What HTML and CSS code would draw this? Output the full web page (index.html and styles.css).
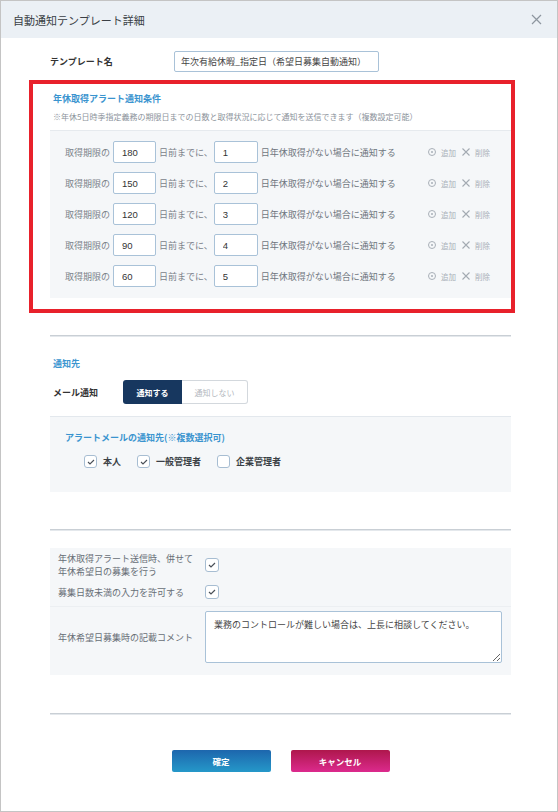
FILE: index.html
```html
<!DOCTYPE html>
<html lang="ja">
<head>
<meta charset="utf-8">
<title>自動通知テンプレート詳細</title>
<link rel="stylesheet" href="styles.css">
</head>
<body>
<div class="modal">
  <div class="header">
    <span class="title">自動通知テンプレート詳細</span>
    <svg class="close" width="11" height="11" viewBox="0 0 11 11"><path d="M1 1L10 10M10 1L1 10" stroke="#8d969f" stroke-width="1.2" fill="none"/></svg>
  </div>
  <div class="content">
    <div class="name-row">
      <span class="name-label">テンプレート名</span>
      <input class="name-input" type="text" value="年次有給休暇_指定日（希望日募集自動通知）">
    </div>

    <div class="alert-section">
      <div class="highlight"></div>
      <div class="sec-title">年休取得アラート通知条件</div>
      <div class="note">※年休5日時季指定義務の期限日までの日数と取得状況に応じて通知を送信できます（複数設定可能）</div>
      <div class="cond-panel">
        <div class="cond-row">
          <span class="txt">取得期限の</span><input class="num num-a" type="text" value="180"><span class="txt t2">日前までに、</span><input class="num num-b" type="text" value="1"><span class="txt t3">日年休取得がない場合に通知する</span>
          <span class="actions"><span class="add-ic"></span><span class="act">追加</span><svg class="del-ic" width="8" height="8" viewBox="0 0 8 8"><path d="M0.5 0.5L7.5 7.5M7.5 0.5L0.5 7.5" stroke="#a3aab2" stroke-width="1.1"/></svg><span class="act">削除</span></span>
        </div>
        <div class="cond-row">
          <span class="txt">取得期限の</span><input class="num num-a" type="text" value="150"><span class="txt t2">日前までに、</span><input class="num num-b" type="text" value="2"><span class="txt t3">日年休取得がない場合に通知する</span>
          <span class="actions"><span class="add-ic"></span><span class="act">追加</span><svg class="del-ic" width="8" height="8" viewBox="0 0 8 8"><path d="M0.5 0.5L7.5 7.5M7.5 0.5L0.5 7.5" stroke="#a3aab2" stroke-width="1.1"/></svg><span class="act">削除</span></span>
        </div>
        <div class="cond-row">
          <span class="txt">取得期限の</span><input class="num num-a" type="text" value="120"><span class="txt t2">日前までに、</span><input class="num num-b" type="text" value="3"><span class="txt t3">日年休取得がない場合に通知する</span>
          <span class="actions"><span class="add-ic"></span><span class="act">追加</span><svg class="del-ic" width="8" height="8" viewBox="0 0 8 8"><path d="M0.5 0.5L7.5 7.5M7.5 0.5L0.5 7.5" stroke="#a3aab2" stroke-width="1.1"/></svg><span class="act">削除</span></span>
        </div>
        <div class="cond-row">
          <span class="txt">取得期限の</span><input class="num num-a" type="text" value="90"><span class="txt t2">日前までに、</span><input class="num num-b" type="text" value="4"><span class="txt t3">日年休取得がない場合に通知する</span>
          <span class="actions"><span class="add-ic"></span><span class="act">追加</span><svg class="del-ic" width="8" height="8" viewBox="0 0 8 8"><path d="M0.5 0.5L7.5 7.5M7.5 0.5L0.5 7.5" stroke="#a3aab2" stroke-width="1.1"/></svg><span class="act">削除</span></span>
        </div>
        <div class="cond-row">
          <span class="txt">取得期限の</span><input class="num num-a" type="text" value="60"><span class="txt t2">日前までに、</span><input class="num num-b" type="text" value="5"><span class="txt t3">日年休取得がない場合に通知する</span>
          <span class="actions"><span class="add-ic"></span><span class="act">追加</span><svg class="del-ic" width="8" height="8" viewBox="0 0 8 8"><path d="M0.5 0.5L7.5 7.5M7.5 0.5L0.5 7.5" stroke="#a3aab2" stroke-width="1.1"/></svg><span class="act">削除</span></span>
        </div>
      </div>
    </div>

    <div class="divider d1"></div>

    <div class="sec-title dest-title">通知先</div>
    <div class="mail-row">
      <span class="mail-label">メール通知</span>
      <div class="toggle">
        <span class="tg on">通知する</span><span class="tg off">通知しない</span>
      </div>
    </div>

    <div class="recip-panel">
      <div class="sec-title recip-title">アラートメールの通知先(※複数選択可)</div>
      <div class="checks">
        <span class="chk checked"><svg width="8" height="6" viewBox="0 0 8 6"><path d="M1 3L3 5L7 1" stroke="#4a5058" stroke-width="1.1" fill="none"/></svg></span><span class="chk-label">本人</span>
        <span class="chk checked"><svg width="8" height="6" viewBox="0 0 8 6"><path d="M1 3L3 5L7 1" stroke="#4a5058" stroke-width="1.1" fill="none"/></svg></span><span class="chk-label">一般管理者</span>
        <span class="chk"></span><span class="chk-label">企業管理者</span>
      </div>
    </div>

    <div class="divider d2"></div>

    <div class="opt-panel">
      <div class="opt-row r1">
        <span class="opt-label">年休取得アラート送信時、併せて<br>年休希望日の募集を行う</span>
        <span class="chk big checked"><svg width="8" height="6" viewBox="0 0 8 6"><path d="M1 3L3 5L7 1" stroke="#4a5058" stroke-width="1.2" fill="none"/></svg></span>
      </div>
      <div class="opt-row r2">
        <span class="opt-label">募集日数未満の入力を許可する</span>
        <span class="chk big checked"><svg width="8" height="6" viewBox="0 0 8 6"><path d="M1 3L3 5L7 1" stroke="#4a5058" stroke-width="1.2" fill="none"/></svg></span>
      </div>
      <div class="opt-row r3">
        <span class="opt-label">年休希望日募集時の記載コメント</span>
        <textarea class="comment">業務のコントロールが難しい場合は、上長に相談してください。</textarea>
      </div>
    </div>

    <div class="divider d3"></div>

    <div class="buttons">
      <button class="btn ok">確定</button>
      <button class="btn cancel">キャンセル</button>
    </div>
  </div>
</div>
</body>
</html>
```
FILE: styles.css
```css
* { box-sizing: border-box; }
html, body { margin: 0; padding: 0; background: #fff; }
body {
  font-family: "Noto Sans CJK JP", "Noto Sans", sans-serif;
  color: #333;
}
.modal {
  width: 558px;
  height: 812px;
  border: 1px solid #c4c4c4;
  background: #fff;
  overflow: hidden;
}
.header {
  height: 37px;
  background: #ebf0f5;
  display: flex;
  align-items: center;
  padding: 0 13px 0 12px;
}
.title {
  font-size: 11px;
  color: #3a3f45;
  flex: 1;
}
.close { display: block; margin-right: 2px; }
.content {
  padding: 13px 46px 0 49px;
}
.name-row {
  display: flex;
  align-items: center;
  height: 21px;
}
.name-label {
  width: 124px;
  font-size: 9px;
  font-weight: bold;
  color: #333;
}
.name-input {
  width: 205px;
  height: 21px;
  border: 1px solid #a9c2d8;
  border-radius: 2px;
  font-family: inherit;
  font-size: 9px;
  color: #444;
  padding: 0 0 0 6px;
  outline: none;
}
.alert-section {
  position: relative;
  margin-top: 14px;
  padding-top: 7px;
}
.highlight {
  position: absolute;
  top: -6px;
  left: -21px;
  right: -4px;
  bottom: -15px;
  border: 4px solid #e8212b;
  pointer-events: none;
}
.sec-title {
  font-size: 9px;
  font-weight: bold;
  color: #3a94cf;
  line-height: 12px;
  padding-left: 3px;
}
.note {
  margin-top: 6px;
  padding-left: 3px;
  font-size: 8px;
  line-height: 12px;
  color: #8c939b;
  white-space: nowrap;
}
.cond-panel {
  margin-top: 7px;
  background: #f5f7f9;
  border-top: 1px solid #e6eaee;
  padding: 10px 21px 11px 15px;
  display: flex;
  flex-direction: column;
  gap: 9px;
}
.cond-row {
  display: flex;
  align-items: center;
  height: 22px;
}
.txt {
  font-size: 9px;
  color: #7b828a;
  white-space: nowrap;
}
.t3 { color: #6f767e; }
.num {
  height: 22px;
  border: 1px solid #a9c2d8;
  border-radius: 2px;
  background: #fff;
  font-family: "Liberation Sans", Arial, sans-serif;
  font-size: 9.5px;
  color: #333;
  padding: 0 0 0 8px;
  outline: none;
}
.num-a { width: 43px; margin: 0 3px 0 3px; }
.num-b { width: 44px; margin: 0 3px 0 1px; }
.actions {
  margin-left: auto;
  display: flex;
  align-items: center;
}
.add-ic {
  width: 8px;
  height: 8px;
  border: 1px solid #a9b0b8;
  border-radius: 50%;
  position: relative;
}
.add-ic::after {
  content: "";
  position: absolute;
  left: 2px;
  top: 2px;
  width: 2px;
  height: 2px;
  border-radius: 50%;
  background: #a9b0b8;
}
.act {
  font-size: 7.5px;
  color: #a9b0b8;
  margin-left: 5px;
}
.del-ic { margin-left: 6px; display: block; }
.divider {
  height: 2px;
  background: #c9cfd5;
  border-bottom: 1px solid #e4e8ec;
}
.d1 { margin-top: 37px; }
.dest-title { margin-top: 21px; }
.mail-row {
  display: flex;
  align-items: center;
  margin-top: 10px;
}
.mail-label {
  width: 73px;
  padding-left: 3px;
  font-size: 9px;
  font-weight: bold;
  color: #333;
}
.toggle { display: flex; height: 24px; }
.tg {
  display: flex;
  align-items: center;
  justify-content: center;
  font-size: 8px;
}
.tg.on {
  width: 59px;
  background: #17375f;
  color: #fff;
  font-weight: bold;
  border-radius: 3px 0 0 3px;
}
.tg.off {
  width: 66px;
  background: #fff;
  color: #b3b8be;
  border: 1px solid #d3d8dd;
  border-left: none;
  border-radius: 0 3px 3px 0;
}
.recip-panel {
  margin-top: 12px;
  background: #f5f7f9;
  border-top: 1px solid #e3e8ed;
  height: 76px;
  padding: 15px 0 0 12px;
}
.recip-title { padding-left: 3px; }
.checks {
  display: flex;
  align-items: center;
  margin-top: 11px;
  padding-left: 22px;
}
.chk {
  width: 13px;
  height: 13px;
  border: 1.5px solid #a7bdd2;
  border-radius: 3px;
  background: #fff;
  display: inline-flex;
  align-items: center;
  justify-content: center;
  flex-shrink: 0;
}
.chk svg { display: block; }
.chk-label {
  font-size: 9px;
  font-weight: bold;
  color: #3a3f45;
  margin-left: 6px;
  margin-right: 16px;
}
.d2 { margin-top: 37px; }
.opt-panel {
  margin-top: 17px;
  background: #f5f7f9;
  padding: 2px 0 0 0;
  height: 127px;
}
.opt-row {
  display: grid;
  grid-template-columns: 155px 1fr;
  align-items: center;
}
.opt-label {
  padding-left: 8px;
  font-size: 9px;
  line-height: 13px;
  color: #676e76;
}
.r1 { height: 30px; }
.r2 { height: 24px; }
.r3 {
  border-top: 1px solid #eceff2;
  margin-top: 2px;
  padding: 4px 9px 9px 0;
}
.chk.big { width: 14px; height: 14px; }
.comment {
  display: block;
  width: 297px;
  height: 52px;
  border: 1px solid #a9c2d8;
  border-radius: 2px;
  font-family: inherit;
  font-size: 9px;
  color: #444;
  padding: 6px 8px;
  resize: both;
  outline: none;
}
.d3 { margin-top: 38px; }
.buttons {
  display: flex;
  justify-content: center;
  gap: 20px;
  margin-top: 35px;
}
.btn {
  width: 99px;
  height: 22px;
  border: none;
  border-radius: 2px;
  font-family: inherit;
  font-size: 8.5px;
  font-weight: bold;
  color: #fff;
  padding: 0;
}
.btn.ok { background: linear-gradient(#1d66ad, #2598c9); }
.btn.cancel { background: linear-gradient(#ae174c, #dc2a8d); }
```
